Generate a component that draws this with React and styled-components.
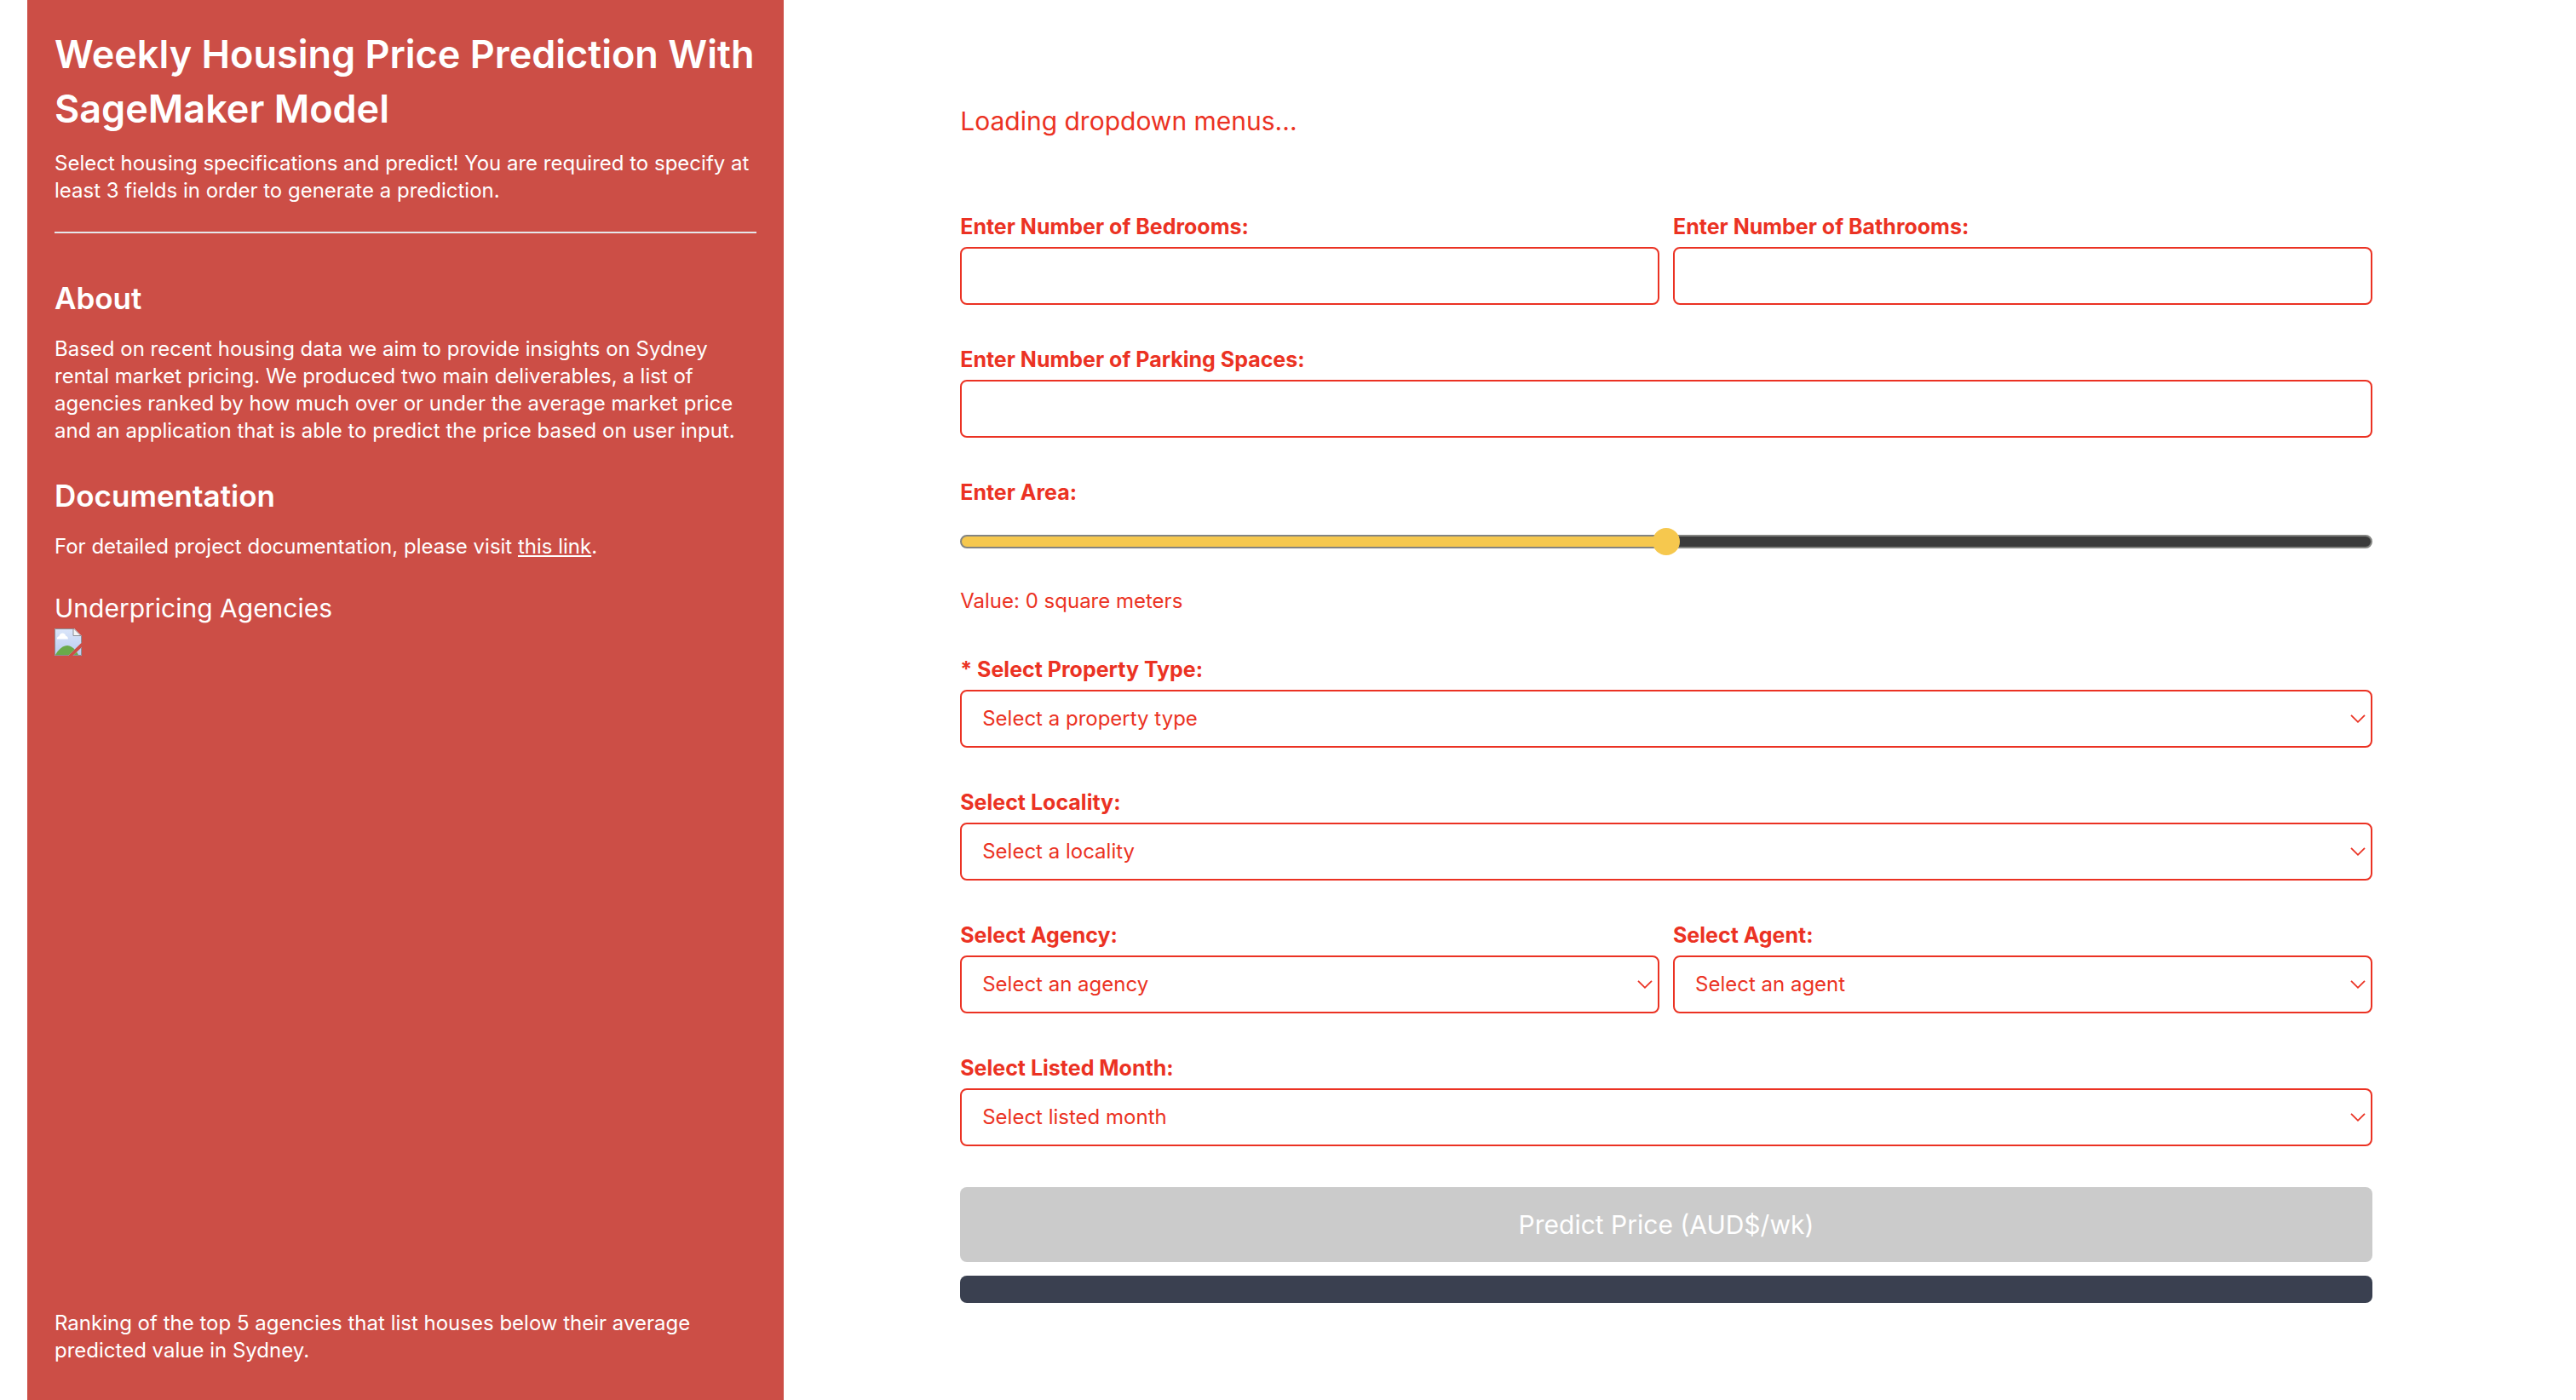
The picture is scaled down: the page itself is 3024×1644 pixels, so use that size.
import React, { useState } from "react";
import styled, { createGlobalStyle } from "styled-components";

const colors = {
  panel: "#cc4e46",
  accent: "#eb3223",
  rule: "#e5e7eb",
  disabled: "#cbcbcb",
  result: "#3a4050",
  thumb: "#f6c84e",
  track: "#3b3b3b",
  trackEdge: "#838481",
};

const GlobalStyle = createGlobalStyle`
  *, *::before, *::after { box-sizing: border-box; }
  body {
    margin: 0;
    background: #ffffff;
    font-family: Inter, "Liberation Sans", sans-serif;
    font-size: 24px;
    line-height: 32px;
  }
  h1, h2, p { margin: 0; }
`;

const Page = styled.div`
  display: grid;
  grid-template-columns: 3fr 7fr;
  min-height: 100vh;
  padding: 0 32px;
`;

const Sidebar = styled.aside`
  padding: 32px;
  background: ${colors.panel};
  color: #ffffff;
`;

const Title = styled.h1`
  margin-bottom: 16px;
  font-size: 45px;
  line-height: 64px;
  font-weight: 600;
`;

const Rule = styled.hr`
  height: 2px;
  margin: 32px 0 48px;
  border: 0;
  background: ${colors.rule};
`;

const Section = styled.section`
  margin-bottom: 32px;
`;

const SectionTitle = styled.h2`
  margin-bottom: 16px;
  font-size: 35px;
  line-height: 56px;
  font-weight: 600;
`;

const Lead = styled.p`
  font-size: 30px;
  line-height: 48px;
`;

const DocLink = styled.a`
  color: inherit;
  text-decoration: underline;
`;

const Figure = styled.figure`
  margin: 0;
`;

const Chart = styled.div`
  height: 768px;
  margin-bottom: 32px;

  svg { display: block; }
`;

const Main = styled.main`
  width: 80%;
  margin: 0 auto;
  padding: 118px 0 64px;
  color: ${colors.accent};
`;

const Form = styled.form`
  display: flex;
  flex-direction: column;
  gap: 48px;
  margin-top: 84px;
`;

const Row = styled.div`
  display: grid;
  grid-template-columns: 1fr 1fr;
  gap: 16px;
`;

const FieldBox = styled.div`
  display: flex;
  flex-direction: column;
  gap: 8px;
`;

const Label = styled.label`
  font-weight: 700;
  font-size: 25px;
`;

const control = `
  width: 100%;
  height: 68px;
  padding: 0 24px;
  border: 2px solid ${colors.accent};
  border-radius: 8px;
  background: #ffffff;
  color: ${colors.accent};
  font: inherit;
`;

const Input = styled.input`
  ${control}
`;

const SelectFrame = styled.div`
  display: grid;
  align-items: center;

  > * { grid-area: 1 / 1; }

  svg {
    justify-self: end;
    margin-right: 8px;
    pointer-events: none;
  }
`;

const Select = styled.select`
  ${control}
  appearance: none;
`;

const AreaBox = styled.div`
  display: flex;
  flex-direction: column;
`;

const Slider = styled.input`
  appearance: none;
  width: 100%;
  height: 32px;
  margin: 26px 0 38px;
  background: transparent;

  &::-webkit-slider-runnable-track {
    height: 16px;
    border: 2px solid ${colors.trackEdge};
    border-radius: 8px;
    background: linear-gradient(
      to right,
      ${colors.thumb} ${(p) => p.$fill}%,
      ${colors.track} ${(p) => p.$fill}%
    );
  }

  &::-webkit-slider-thumb {
    appearance: none;
    width: 32px;
    height: 32px;
    margin-top: -10px;
    border-radius: 50%;
    background: ${colors.thumb};
  }
`;

const Actions = styled.div`
  display: flex;
  flex-direction: column;
  gap: 16px;
`;

const Submit = styled.button`
  padding: 20px;
  border: 0;
  border-radius: 8px;
  background: ${colors.accent};
  color: #ffffff;
  font: inherit;
  font-size: 30px;
  line-height: 48px;

  &:disabled { background: ${colors.disabled}; }
`;

const Result = styled.output`
  display: block;
  padding: 16px;
  border-radius: 8px;
  background: ${colors.result};
  color: #ffffff;
`;

function MissingImage() {
  return (
    <svg width="32" height="32" viewBox="0 0 32 32" role="img" aria-label="Underpricing agencies">
      <defs>
        <linearGradient id="sky" x1="0" y1="0" x2="0" y2="1">
          <stop offset="0" stopColor="#dbe6fa" />
          <stop offset="1" stopColor="#b9ccf0" />
        </linearGradient>
        <clipPath id="sheet">
          <path d="M0 0H23L32 9V16.5L16 32H0ZM32 22V32H21.5Z" />
        </clipPath>
      </defs>
      <g clipPath="url(#sheet)">
        <rect width="32" height="32" fill="url(#sky)" />
        <path d="M3 12.5C2.6 10.5 4 9.4 5.4 9.3C5.8 7 7.4 5.6 9.4 5.6C11.6 5.6 12.9 7 13.2 8.8C15 9 16 10.6 15.8 12.5Z" fill="#fff" />
        <path d="M1 31C5 24 10 20 15 20C20 20 25 25 28 31Z" fill="#6aaa4a" />
        <path d="M22 0V9H32L23 0Z" fill="#f4f4f4" />
        <path d="M22 0V8.5H32" fill="none" stroke="#8b8f96" />
        <path d="M.5 .5H23L31.5 9V31.5H.5Z" fill="none" stroke="#8b8f96" />
      </g>
    </svg>
  );
}

function Chevron() {
  return (
    <svg width="18" height="12" viewBox="0 0 18 12" aria-hidden="true">
      <path d="M1 1.8L9 9.8L17 1.8" fill="none" stroke={colors.accent} strokeWidth="1.8" />
    </svg>
  );
}

function NumberField({ id, label }) {
  return (
    <FieldBox>
      <Label htmlFor={id}>{label}</Label>
      <Input id={id} type="text" inputMode="numeric" />
    </FieldBox>
  );
}

function SelectField({ id, label, placeholder }) {
  return (
    <FieldBox>
      <Label htmlFor={id}>{label}</Label>
      <SelectFrame>
        <Select id={id} defaultValue="">
          <option value="">{placeholder}</option>
        </Select>
        <Chevron />
      </SelectFrame>
    </FieldBox>
  );
}

export default function App() {
  const [position, setPosition] = useState(50);
  const [area, setArea] = useState(0);

  const handleArea = (event) => {
    setPosition(Number(event.target.value));
    setArea(Number(event.target.value));
  };

  return (
    <>
      <GlobalStyle />
      <Page>
        <Sidebar>
          <Title>Weekly Housing Price Prediction With SageMaker Model</Title>
          <p>
            Select housing specifications and predict! You are required to specify at least 3
            fields in order to generate a prediction.
          </p>
          <Rule />
          <Section>
            <SectionTitle>About</SectionTitle>
            <p>
              Based on recent housing data we aim to provide insights on Sydney rental market
              pricing. We produced two main deliverables, a list of agencies ranked by how much
              over or under the average market price and an application that is able to predict
              the price based on user input.
            </p>
          </Section>
          <Section>
            <SectionTitle>Documentation</SectionTitle>
            <p>
              For detailed project documentation, please visit <DocLink href="#docs">this link</DocLink>.
            </p>
          </Section>
          <Lead>Underpricing Agencies</Lead>
          <Figure>
            <Chart>
              <MissingImage />
            </Chart>
            <figcaption>
              Ranking of the top 5 agencies that list houses below their average predicted value
              in Sydney.
            </figcaption>
          </Figure>
        </Sidebar>
        <Main>
          <Lead>Loading dropdown menus...</Lead>
          <Form onSubmit={(event) => event.preventDefault()}>
            <Row>
              <NumberField id="bedrooms" label="Enter Number of Bedrooms:" />
              <NumberField id="bathrooms" label="Enter Number of Bathrooms:" />
            </Row>
            <NumberField id="parking" label="Enter Number of Parking Spaces:" />
            <AreaBox>
              <Label htmlFor="area">Enter Area:</Label>
              <Slider
                id="area"
                type="range"
                min="0"
                max="100"
                value={position}
                $fill={position}
                onChange={handleArea}
              />
              <p>Value: {area} square meters</p>
            </AreaBox>
            <SelectField id="type" label="* Select Property Type:" placeholder="Select a property type" />
            <SelectField id="locality" label="Select Locality:" placeholder="Select a locality" />
            <Row>
              <SelectField id="agency" label="Select Agency:" placeholder="Select an agency" />
              <SelectField id="agent" label="Select Agent:" placeholder="Select an agent" />
            </Row>
            <SelectField id="month" label="Select Listed Month:" placeholder="Select listed month" />
            <Actions>
              <Submit type="submit" disabled>Predict Price (AUD$/wk)</Submit>
              <Result htmlFor="type" />
            </Actions>
          </Form>
        </Main>
      </Page>
    </>
  );
}
